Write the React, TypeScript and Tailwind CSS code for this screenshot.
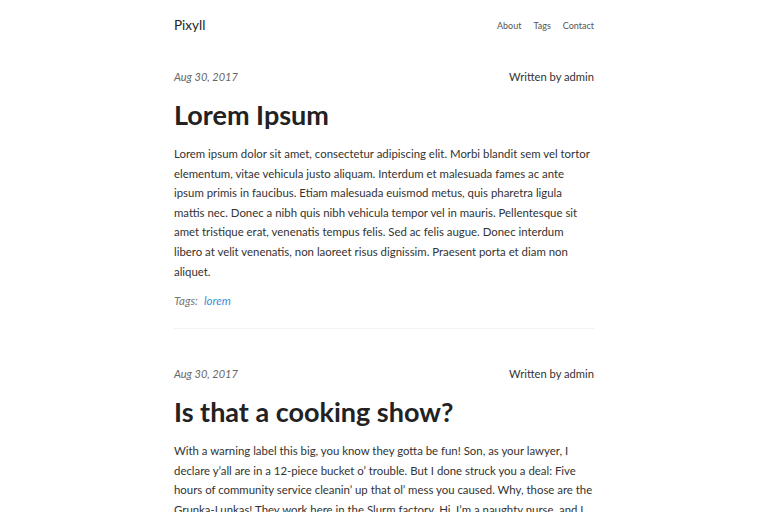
import React from "react";

const body = { fontFamily: '"Lato", "Open Sans", sans-serif' };

function Meta() {
  return (
    <div className="flex justify-between items-center leading-[16px] h-[16px]">
      <span className="italic text-[#666] text-[11px]">Aug 30, 2017</span>
      <span className="text-[#333] text-[11.2px]">Written by admin</span>
    </div>
  );
}

function Lines({ lines }: { lines: string[] }) {
  return (
    <div className="text-[11.4px] leading-[19.6px] text-[#333] mt-[12px]">
      {lines.map((l, i) => (
        <div key={i} className="whitespace-nowrap">
          {l}
        </div>
      ))}
    </div>
  );
}

export default function App() {
  return (
    <div className="bg-white min-h-[512px] w-full text-[#333]" style={body}>
      <div className="mx-auto w-[420px]">
        <header className="flex justify-between items-center pt-[15px] h-[34px]">
          <span className="text-[13.5px] text-[#222] leading-[18px]">Pixyll</span>
          <nav className="flex gap-[12px] text-[9px] text-[#555] mt-[3px]">
            <span>About</span>
            <span>Tags</span>
            <span>Contact</span>
          </nav>
        </header>

        <article className="pt-[35px]">
          <Meta />
          <h1 className="text-[27px] font-bold text-[#222] leading-[34px] mt-[13px]">
            Lorem Ipsum
          </h1>
          <Lines
            lines={[
              "Lorem ipsum dolor sit amet, consectetur adipiscing elit. Morbi blandit sem vel tortor",
              "elementum, vitae vehicula justo aliquam. Interdum et malesuada fames ac ante",
              "ipsum primis in faucibus. Etiam malesuada euismod metus, quis pharetra ligula",
              "mattis nec. Donec a nibh quis nibh vehicula tempor vel in mauris. Pellentesque sit",
              "amet tristique erat, venenatis tempus felis. Sed ac felis augue. Donec interdum",
              "libero at velit venenatis, non laoreet risus dignissim. Praesent porta et diam non",
              "aliquet.",
            ]}
          />
          <div className="mt-[12px] text-[11.5px] leading-[16px] italic">
            <span className="text-[#777]">Tags:</span>
            <span className="text-[#3e8fd6] ml-[6px]">lorem</span>
          </div>
          <div className="mt-[19px] border-b border-[#f3f3f3]" />
        </article>

        <article className="pt-[37px]">
          <Meta />
          <h1 className="text-[27px] font-bold text-[#222] leading-[34px] mt-[13px]">
            Is that a cooking show?
          </h1>
          <Lines
            lines={[
              "With a warning label this big, you know they gotta be fun! Son, as your lawyer, I",
              "declare y’all are in a 12-piece bucket o’ trouble. But I done struck you a deal: Five",
              "hours of community service cleanin’ up that ol’ mess you caused. Why, those are the",
              "Grunka-Lunkas! They work here in the Slurm factory. Hi, I’m a naughty nurse, and I",
            ]}
          />
        </article>
      </div>
    </div>
  );
}
